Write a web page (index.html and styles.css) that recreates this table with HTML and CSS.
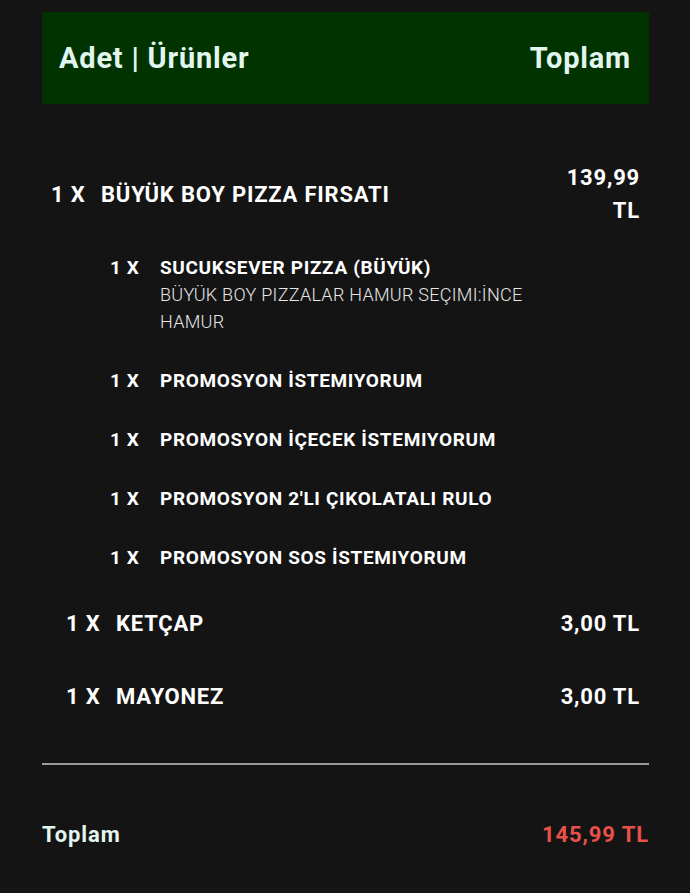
FILE: index.html
```html
<!DOCTYPE html>
<html lang="tr">
<head>
<meta charset="utf-8">
<link rel="stylesheet" href="styles.css">
</head>
<body>
<div class="wrap">
  <div class="header">
    <span>Adet | Ürünler</span>
    <span>Toplam</span>
  </div>

  <div class="item item-main">
    <span class="qty">1 X</span>
    <span class="name">BÜYÜK BOY PIZZA FIRSATI</span>
    <span class="price price-narrow">139,99 TL</span>
  </div>

  <div class="subs">
    <div class="sub">
      <span class="qty">1 X</span>
      <div class="sub-body">
        <div class="sub-name">SUCUKSEVER PIZZA (BÜYÜK)</div>
        <div class="sub-desc">BÜYÜK BOY PIZZALAR HAMUR SEÇIMI:İNCE HAMUR</div>
      </div>
    </div>
    <div class="sub">
      <span class="qty">1 X</span>
      <div class="sub-body"><div class="sub-name">PROMOSYON İSTEMIYORUM</div></div>
    </div>
    <div class="sub">
      <span class="qty">1 X</span>
      <div class="sub-body"><div class="sub-name">PROMOSYON İÇECEK İSTEMIYORUM</div></div>
    </div>
    <div class="sub">
      <span class="qty">1 X</span>
      <div class="sub-body"><div class="sub-name">PROMOSYON 2'LI ÇIKOLATALI RULO</div></div>
    </div>
    <div class="sub">
      <span class="qty">1 X</span>
      <div class="sub-body"><div class="sub-name">PROMOSYON SOS İSTEMIYORUM</div></div>
    </div>
  </div>

  <div class="extras">
    <div class="item item-extra">
      <span class="qty">1 X</span>
      <span class="name">KETÇAP</span>
      <span class="price">3,00 TL</span>
    </div>
    <div class="item item-extra">
      <span class="qty">1 X</span>
      <span class="name">MAYONEZ</span>
      <span class="price">3,00 TL</span>
    </div>
  </div>

  <div class="divider"></div>

  <div class="total">
    <span class="total-label">Toplam</span>
    <span class="total-value">145,99 TL</span>
  </div>
</div>
</body>
</html>
```

FILE: styles.css
```css
html, body {
  margin: 0;
  padding: 0;
  background: #141414;
}

body {
  font-family: Roboto, "Noto Sans", sans-serif;
  color: #ffffff;
}

.wrap {
  padding: 12px 41px 0 42px;
}

.header {
  height: 92px;
  background: #003300;
  display: flex;
  justify-content: space-between;
  align-items: center;
  padding: 0 18px 0 17px;
  font-size: 29px;
  font-weight: 700;
  color: #e2f6ef;
  letter-spacing: 0.8px;
}

.item {
  display: flex;
  align-items: center;
  font-size: 22px;
  font-weight: 700;
  line-height: 33px;
  letter-spacing: 0.8px;
  padding-right: 9px;
}

.item-main {
  margin-top: 57px;
  padding-left: 9px;
}

.qty {
  width: 50px;
  flex: none;
}

.name {
  flex: 1;
}

.price {
  text-align: right;
}

.price-narrow {
  width: 80px;
}

.subs {
  margin-top: 27px;
  padding-left: 68px;
  display: flex;
  flex-direction: column;
  gap: 32px;
}

.sub {
  display: flex;
  font-size: 19px;
  line-height: 27px;
}

.sub .qty {
  font-weight: 700;
  letter-spacing: 0.6px;
}

.sub-body {
  flex: 1;
  padding-right: 110px;
}

.sub-name {
  font-weight: 700;
  letter-spacing: 0.65px;
}

.sub-desc {
  font-size: 18px;
  font-weight: 300;
  color: #e6e6e6;
  letter-spacing: 0.28px;
}

.extras {
  margin-top: 36px;
  display: flex;
  flex-direction: column;
  gap: 40px;
}

.item-extra {
  padding-left: 24px;
}

.divider {
  margin-top: 50px;
  height: 2px;
  background: #9a9a9a;
}

.total {
  display: flex;
  justify-content: space-between;
  align-items: center;
  margin-top: 53px;
  font-size: 22px;
  font-weight: 700;
  line-height: 33px;
  letter-spacing: 0.9px;
}

.total-label {
  color: #e2f6ef;
}

.total-value {
  color: #e8504a;
}
```
